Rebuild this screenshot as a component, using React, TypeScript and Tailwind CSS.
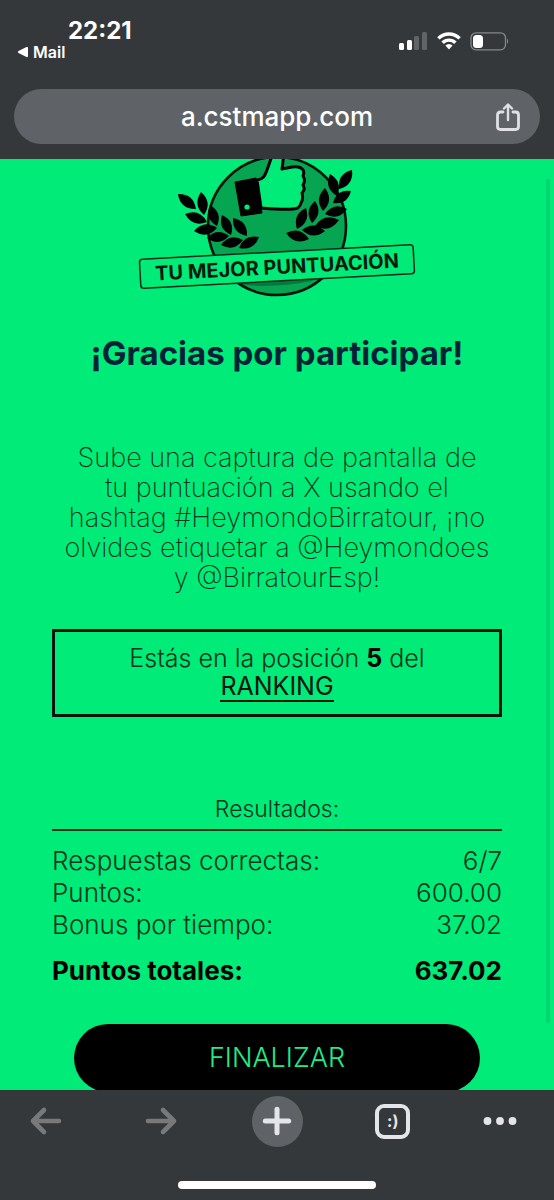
import { Plus } from "lucide-react";

const results = [
  { label: "Respuestas correctas:", value: "6/7" },
  { label: "Puntos:", value: "600.00" },
  { label: "Bonus por tiempo:", value: "37.02" },
];

// base and tip of every leaf: x1, y1, x2, y2
const leaves = [
  [178, 194, 196, 209],
  [201, 192, 204, 215],
  [185, 214, 207, 222],
  [210, 205, 217, 226],
  [194, 231, 217, 228],
  [222, 215, 231, 235],
  [207, 238, 229, 236],
  [233, 218, 247, 236],
  [221, 245, 243, 240],
  [259, 237, 239, 248],
  [352, 170, 339, 189],
  [330, 174, 337, 196],
  [351, 191, 333, 203],
  [325, 188, 323, 211],
  [347, 209, 325, 214],
  [315, 201, 312, 223],
  [339, 220, 315, 226],
  [306, 208, 297, 229],
  [325, 231, 302, 230],
  [286, 233, 309, 239],
];

function leafPath([x1, y1, x2, y2]: number[]) {
  const mx = (x1 + x2) / 2;
  const my = (y1 + y2) / 2;
  const dx = (x2 - x1) * 0.44;
  const dy = (y2 - y1) * 0.44;
  return `M${x1} ${y1}Q${mx - dy} ${my + dx} ${x2} ${y2}Q${mx + dy} ${my - dx} ${x1} ${y1}Z`;
}

function Badge() {
  return (
    <svg viewBox="137 159 280 140" className="block w-[280px] h-[140px] mx-auto">
      <circle cx="277" cy="226" r="69" fill="#05a552" />
      <path d="M232 281l90-7-10 7q-40 8-76 3z" fill="#067a3e" />
      <path
        d="M257 180c7-1 8-5 10-10l6-17h11l-2 16c6-1 12-3 16-2 5 1 7 4 5 9 2 3 2 6 0 9 2 3 1 6-1 8 1 4 1 7-1 10-1 4-4 6-8 6-10 1-20 0-32-1z"
        fill="#00eb78" stroke="#000" strokeWidth="3" strokeLinejoin="round"
      />
      <circle cx="277" cy="226" r="69" fill="none" stroke="#02140a" strokeWidth="2.6" />
      <path d="M235 182l21-4 6 35-21 3z" stroke="#000" strokeWidth="1" strokeLinejoin="round" />
      <circle cx="247" cy="207" r="2.6" fill="#00eb78" />
      {leaves.map((leaf) => (
        <path key={leaf.join()} d={leafPath(leaf)} />
      ))}
      <g transform="rotate(-3.1 277 267)">
        <rect x="140" y="252" width="274" height="29" rx="3" fill="#00eb78" stroke="#032b17" strokeWidth="1.5" />
        <text x="277" y="274" textAnchor="middle" fontSize="20" fontWeight="700" fill="#001a0c">
          TU MEJOR PUNTUACIÓN
        </text>
      </g>
    </svg>
  );
}

function StatusBar() {
  return (
    <div className="flex justify-between pt-4 pl-4 pr-11">
      <div className="flex flex-col">
        <span className="pl-[52px] text-2xl leading-[30px] font-bold">22:21</span>
        <a href="#mail" className="flex items-center gap-1 text-base leading-3 font-semibold">
          <svg width="13" height="12" viewBox="0 0 13 12" fill="currentColor">
            <path d="M2.500 5L10.500 1Q12 .5 12 2v8Q12 11.500 10.500 11L2.500 7Q1 6 2.500 5z" />
          </svg>
          Mail
        </a>
      </div>
      <div className="flex items-center gap-2 h-[50px]">
        <svg width="30" height="20" viewBox="0 0 30 20">
          <rect x="1" y="12" width="5" height="7" rx="1.5" fill="#fff" />
          <rect x="9" y="9" width="5" height="10" rx="1.5" fill="#fff" />
          <rect x="16" y="5" width="5" height="14" rx="1.5" fill="#616467" />
          <rect x="24" y="1" width="5" height="18" rx="1.5" fill="#616467" />
        </svg>
        <svg width="26" height="20" viewBox="0 0 26 20" fill="none" stroke="#fff" strokeWidth="3.4">
          <path d="M2.4 7.4a15 15 0 0 1 21.2 0" />
          <path d="M6.6 11.8a9 9 0 0 1 12.8 0" />
          <path d="M9.4 14.6a5 5 0 0 1 7.2 0L13 18.6z" fill="#fff" stroke="none" />
        </svg>
        <svg width="40" height="20" viewBox="0 0 40 20">
          <rect x="1" y="1.8" width="34.5" height="17" rx="5" fill="none" stroke="#85888a" strokeWidth="1.3" />
          <rect x="3" y="4" width="10" height="13" rx="3.5" fill="#fff" />
          <path d="M37 7.5q2.4 2.7 0 5.5z" fill="#85888a" />
        </svg>
      </div>
    </div>
  );
}

function Arrow({ d }: { d: string }) {
  return (
    <svg width="34" height="30" viewBox="0 0 34 30" fill="none" stroke="currentColor" strokeWidth="4.6" strokeLinecap="round" strokeLinejoin="round">
      <path d={d} />
    </svg>
  );
}

export default function App() {
  return (
    <div className="flex flex-col h-screen bg-[#35383b] text-white font-['Inter',sans-serif]">
      <header className="flex flex-col justify-between h-[159px] shrink-0">
        <StatusBar />
        <div className="flex items-center h-[55px] mx-3.5 mb-[15px] px-5 rounded-full bg-[#5f6367]">
          <span className="w-6" />
          <span className="flex-1 text-center text-[26px] leading-8 font-medium">a.cstmapp.com</span>
          <button type="button" aria-label="Compartir" className="text-[#dfe1e4]">
            <svg width="24" height="28" viewBox="0 0 24 28" fill="none" stroke="currentColor" strokeWidth="2.8" strokeLinecap="round" strokeLinejoin="round">
              <path d="M7 9H4.500Q1.500 9 1.500 12v11.500q0 3 3 3h15q3 0 3-3V12q0-3-3-3H17" />
              <path d="M12 17V2M8 5.500L12 1.500 16 5.500" strokeWidth="2.4" />
            </svg>
          </button>
        </div>
      </header>

      <main className="relative flex-1 min-h-0 overflow-y-auto [scrollbar-width:none] bg-[#00eb78] text-[#00351a]">
        <Badge />
        <div className="px-[52px]">
          <h1 className="mt-[34px] text-center text-[33px] leading-10 font-bold text-[#03223a] whitespace-nowrap">
            ¡Gracias por participar!
          </h1>
          <p className="mt-[70px] text-center text-[27px] leading-[30px] font-extralight whitespace-nowrap">
            Sube una captura de pantalla de<br />
            tu puntuación a X usando el<br />
            hashtag #HeymondoBirratour, ¡no<br />
            olvides etiquetar a @Heymondoes<br />
            y @BirratourEsp!
          </p>
          <div className="mt-9 h-[88px] pt-3 border-[3px] border-[#00150b] text-center text-[25px] leading-7 font-light">
            Estás en la posición <b className="font-bold text-black">5</b> del
            <br />
            <a href="#ranking" className="inline-block border-b-2 border-current font-normal text-[#00150b]">RANKING</a>
          </div>
          <h2 className="mt-[76px] pb-1 border-b-2 border-[#00341a] text-center text-[23px] leading-8 font-light">
            Resultados:
          </h2>
          <table className="w-full mt-3.5 text-[26px] leading-8 font-light">
            <tbody>
              {results.map(({ label, value }) => (
                <tr key={label}>
                  <th scope="row" className="p-0 text-left font-light">{label}</th>
                  <td className="p-0 text-right">{value}</td>
                </tr>
              ))}
            </tbody>
            <tfoot>
              <tr className="font-bold text-black">
                <th scope="row" className="pt-3.5 text-left">Puntos totales:</th>
                <td className="pt-3.5 text-right">637.02</td>
              </tr>
            </tfoot>
          </table>
          <div className="mt-[37px] px-[22px]">
            <button type="button" className="w-full h-[68px] rounded-full bg-black text-[27px] font-light text-[#1eed87]">
              FINALIZAR
            </button>
          </div>
        </div>
        <div className="absolute top-5 right-1 w-1 h-[844px] rounded-full bg-[#00d76e]" />
      </main>

      <footer className="flex flex-col justify-between items-center shrink-0 h-[110px] pt-1 pb-[11px]">
        <nav className="grid grid-flow-col auto-cols-[51px] items-center justify-between justify-items-center w-full h-[54px] px-5">
          <button type="button" aria-label="Atrás" className="text-[#77797b]">
            <Arrow d="M15 4L4 15l11 11M4 15h26" />
          </button>
          <button type="button" aria-label="Adelante" className="text-[#77797b]">
            <Arrow d="M19 4l11 11-11 11M30 15H4" />
          </button>
          <button type="button" aria-label="Nueva pestaña" className="flex items-center justify-center size-[51px] rounded-full bg-[#5f6367] text-[#e4e5ea]">
            <Plus size={40} strokeWidth={3} />
          </button>
          <button type="button" aria-label="Pestañas" className="flex items-center justify-center size-[35px] border-4 border-[#e4e5ea] rounded-[9px] text-base font-bold text-[#e4e5ea]">
            :)
          </button>
          <button type="button" aria-label="Más" className="justify-self-start text-[#e4e5ea]">
            <svg width="34" height="8" viewBox="0 0 34 8" fill="currentColor">
              <circle cx="4.5" cy="4" r="3.9" />
              <circle cx="17" cy="4" r="3.9" />
              <circle cx="29.5" cy="4" r="3.9" />
            </svg>
          </button>
        </nav>
        <div className="w-[198px] h-2 rounded-full bg-white" />
      </footer>
    </div>
  );
}
